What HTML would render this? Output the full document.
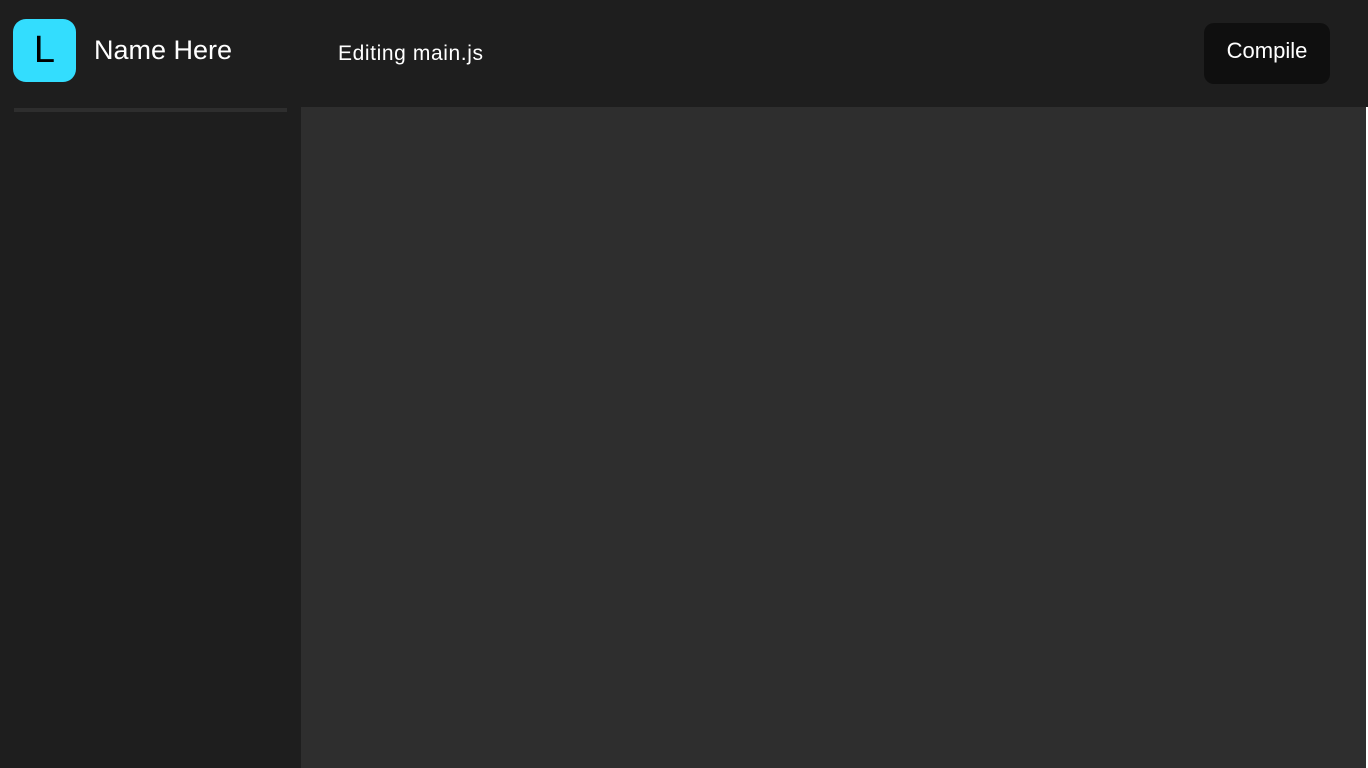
<!DOCTYPE html>
<html><head><style>
body{margin:0;width:1368px;height:768px;background:#1e1e1e;position:relative;overflow:hidden;font-family:"Liberation Sans",sans-serif;color:#fff}
div{position:absolute}
</style></head><body>
<div style="left:13px;top:19px;width:63px;height:63px;background:#33ddfe;border-radius:13px;color:#000;font-size:38px;text-align:center;line-height:63px">L</div>
<div style="left:94px;top:33px;font-size:27px;line-height:34px">Name Here</div>
<div style="left:338px;top:41px;font-size:21px;line-height:26px;letter-spacing:0.6px">Editing main.js</div>
<div style="left:1204px;top:23px;width:126px;height:61px;background:#0f0f0f;border-radius:10px;font-size:22px;line-height:56px;text-align:center">Compile</div>
<div style="left:14px;top:108px;width:273px;height:4px;background:#2e2e2e"></div>
<div style="left:301px;top:107px;width:1065px;height:661px;background:#2e2e2e"></div>
<div style="left:1366px;top:107px;width:2px;height:661px;background:#fff"></div>
</body></html>
